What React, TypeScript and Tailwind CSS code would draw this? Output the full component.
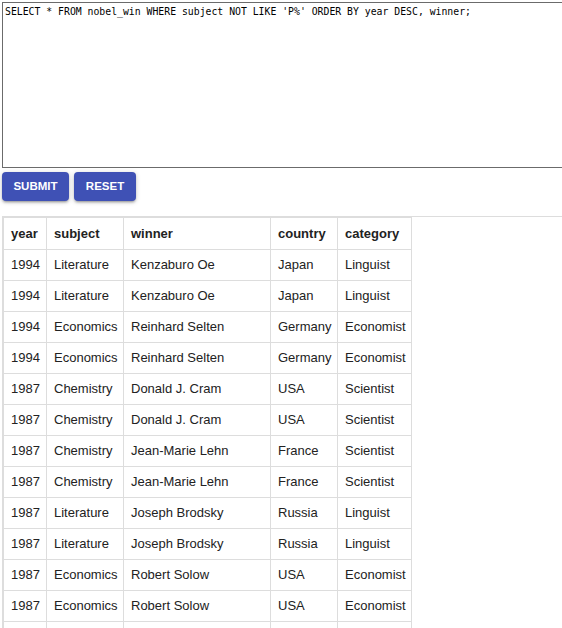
import React from "react";

const rows: [string, string, string, string, string][] = [
  ["1994", "Literature", "Kenzaburo Oe", "Japan", "Linguist"],
  ["1994", "Literature", "Kenzaburo Oe", "Japan", "Linguist"],
  ["1994", "Economics", "Reinhard Selten", "Germany", "Economist"],
  ["1994", "Economics", "Reinhard Selten", "Germany", "Economist"],
  ["1987", "Chemistry", "Donald J. Cram", "USA", "Scientist"],
  ["1987", "Chemistry", "Donald J. Cram", "USA", "Scientist"],
  ["1987", "Chemistry", "Jean-Marie Lehn", "France", "Scientist"],
  ["1987", "Chemistry", "Jean-Marie Lehn", "France", "Scientist"],
  ["1987", "Literature", "Joseph Brodsky", "Russia", "Linguist"],
  ["1987", "Literature", "Joseph Brodsky", "Russia", "Linguist"],
  ["1987", "Economics", "Robert Solow", "USA", "Economist"],
  ["1987", "Economics", "Robert Solow", "USA", "Economist"],
];

const headers = ["year", "subject", "winner", "country", "category"];

export default function App() {
  return (
    <div
      className="w-[562px] h-[628px] overflow-hidden bg-white text-[#222]"
      style={{ fontFamily: '"Liberation Sans", Arial, sans-serif' }}
    >
      <div className="pt-[2px] pl-[2px]">
        <textarea
          readOnly
          className="block w-[620px] h-[166px] border border-[#6b6b6b] p-[2px] resize-none outline-none text-[9.8px] leading-[13px] text-black"
          style={{ fontFamily: '"DejaVu Sans Mono", "Liberation Mono", monospace' }}
          defaultValue={"SELECT * FROM nobel_win WHERE subject NOT LIKE 'P%' ORDER BY year DESC, winner;"}
        />
      </div>
      <div className="flex gap-[5px] pl-[2px] mt-[4px]">
        <button className="h-[29px] w-[67px] rounded-[4px] bg-[#3f51b5] text-white text-[11.5px] font-bold uppercase shadow-[0_1px_5px_rgba(0,0,0,0.2),0_2px_2px_rgba(0,0,0,0.14),0_3px_1px_-2px_rgba(0,0,0,0.12)]">
          Submit
        </button>
        <button className="h-[29px] w-[62px] rounded-[4px] bg-[#3f51b5] text-white text-[11.5px] font-bold uppercase shadow-[0_1px_5px_rgba(0,0,0,0.2),0_2px_2px_rgba(0,0,0,0.14),0_3px_1px_-2px_rgba(0,0,0,0.12)]">
          Reset
        </button>
      </div>
      <div className="mt-[15px] ml-[2px] border-t border-l border-[#dddddd]">
        <table className="border-collapse text-[13px] table-fixed w-[408px]">
          <colgroup>
            <col className="w-[43px]" />
            <col className="w-[77px]" />
            <col className="w-[147px]" />
            <col className="w-[67px]" />
            <col className="w-[74px]" />
          </colgroup>
          <thead>
            <tr>
              {headers.map((h) => (
                <th
                  key={h}
                  className="border border-[#dddddd] pl-[7px] pr-2 py-2 leading-[15px] text-left font-bold"
                >
                  {h}
                </th>
              ))}
            </tr>
          </thead>
          <tbody>
            {rows.map((r, ri) => (
              <tr key={ri}>
                {r.map((c, ci) => (
                  <td
                    key={ci}
                    className="border border-[#dddddd] pl-[7px] pr-2 py-2 leading-[14px] whitespace-nowrap overflow-hidden"
                  >
                    {c}
                  </td>
                ))}
              </tr>
            ))}
            <tr>
              {[0, 1, 2, 3, 4].map((i) => (
                <td key={i} className="border border-[#dddddd] px-2 py-2 leading-[14px]">
                  &nbsp;
                </td>
              ))}
            </tr>
          </tbody>
        </table>
      </div>
    </div>
  );
}
